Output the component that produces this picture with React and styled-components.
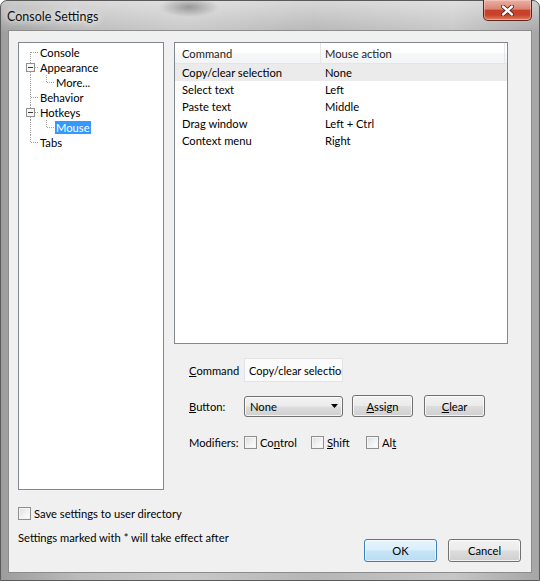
import React from 'react'
import styled, { createGlobalStyle } from 'styled-components'

const FONT = `Lato, "Liberation Sans", Arial, sans-serif`

const GlobalStyle = createGlobalStyle`
  html, body {
    margin: 0;
    padding: 0;
  }
  body {
    width: 540px;
    height: 581px;
    overflow: hidden;
    font-family: ${FONT};
    font-size: 11.2px;
    color: #000;
  }
`

const Window = styled.div`
  box-sizing: border-box;
  width: 540px;
  height: 581px;
  display: flex;
  flex-direction: column;
  padding: 0 7px 7px;
  border: 1px solid #5a5a5a;
  border-radius: 7px 7px 0 0;
  background:
    radial-gradient(ellipse 30px 10px at 188px 6px, rgba(70, 70, 70, 0.45), transparent),
    linear-gradient(180deg, rgba(255, 255, 255, 0.45), rgba(255, 255, 255, 0) 32px),
    linear-gradient(90deg, #9d9d9d 0%, #bababa 14%, #c8c8c8 34%, #b6b6b6 58%, #c6c6c6 84%, #a6a6a6 100%);
`

const TitleBar = styled.div`
  height: 29px;
  display: flex;
  align-items: flex-start;
  justify-content: space-between;
`

const Caption = styled.div`
  margin: 8px 0 0 -1px;
  font-family: ${FONT};
  font-size: 12.5px;
  color: #111;
  text-shadow: 0 0 6px #fff, 0 0 10px rgba(255, 255, 255, 0.9);
`

const CloseButton = styled.div`
  box-sizing: border-box;
  width: 49px;
  height: 21px;
  margin-top: -1px;
  display: flex;
  align-items: center;
  justify-content: center;
  border: 1px solid #5c261c;
  border-top: none;
  border-radius: 0 0 5px 5px;
  background: linear-gradient(180deg, #eab1a3 0%, #d98575 45%, #c8412b 52%, #c7432c 75%, #e0805f 100%);
  box-shadow: inset 0 0 0 1px rgba(255, 220, 210, 0.45);
`

const Client = styled.div`
  flex: 1;
  display: flex;
  flex-direction: column;
  padding: 11px 10px 10px 9px;
  border: 1px solid #8c8c8c;
  background: #f0f0f0;
`

const Main = styled.div`
  display: flex;
  gap: 10px;
  height: 448px;
`

const TreePanel = styled.div`
  box-sizing: border-box;
  width: 146px;
  padding: 2px 0 0 3px;
  border: 1px solid #828790;
  background: #fff;
`

const TreeRow = styled.div`
  display: flex;
  align-items: center;
  height: 15px;
`

const GuideSvg = styled.svg`
  display: block;
  flex: none;
`

const NodeLabel = styled.span`
  margin-left: 1px;
  padding: 0 1px 0 1px;
  line-height: 13px;
  white-space: nowrap;
  background: ${p => (p.$selected ? '#3399ff' : 'transparent')};
  color: ${p => (p.$selected ? '#fff' : '#000')};
`

const RightColumn = styled.div`
  width: 334px;
  display: flex;
  flex-direction: column;
`

const ListView = styled.div`
  box-sizing: border-box;
  height: 302px;
  border: 1px solid #828790;
  background: #fff;
`

const Columns = styled.div`
  display: grid;
  grid-template-columns: 146px 184px;
  align-items: center;
`

const HeaderRow = styled(Columns)`
  height: 20px;
  border-bottom: 1px solid #e3e5e8;
  background: linear-gradient(180deg, #ffffff 0%, #ffffff 45%, #f6f7f8 55%, #f3f4f5 100%);
`

const HeaderCell = styled.div`
  height: 100%;
  display: flex;
  align-items: center;
  padding-left: ${p => p.$pad}px;
  border-right: 1px solid #e5e5e5;
  color: #1e1e1e;
`

const ListRow = styled(Columns)`
  height: 17px;
  background: ${p => (p.$selected ? '#ebebeb' : 'transparent')};
`

const Cell = styled.div`
  padding-left: ${p => p.$pad}px;
  white-space: nowrap;
`

const Form = styled.div`
  display: flex;
  flex-direction: column;
  padding-left: 15px;
`

const FormRow = styled.div`
  display: flex;
  align-items: center;
  height: ${p => p.$h}px;
  margin-top: ${p => p.$top}px;
`

const FieldLabel = styled.div`
  width: 55px;
  flex: none;
`

const ReadOnlyField = styled.div`
  box-sizing: border-box;
  width: 99px;
  height: 24px;
  display: flex;
  align-items: center;
  padding: 0 1px 0 4px;
  overflow: hidden;
  white-space: nowrap;
  font-size: 11px;
  border: 1px solid #e2e3e6;
  background: #fbfbfb;
`

const buttonFace = `
  border: 1px solid #707070;
  border-radius: 3px;
  background: linear-gradient(180deg, #f2f2f2 0%, #ebebeb 48%, #dddddd 52%, #cfcfcf 100%);
  box-shadow: inset 0 0 0 1px rgba(255, 255, 255, 0.75);
`

const Combo = styled.div`
  box-sizing: border-box;
  width: 99px;
  height: 21px;
  display: flex;
  align-items: center;
  justify-content: space-between;
  padding: 0 4px 0 5px;
  ${buttonFace}
`

const PushButton = styled.div`
  box-sizing: border-box;
  width: ${p => p.$w}px;
  height: ${p => p.$h}px;
  margin-left: ${p => p.$gap || 0}px;
  display: flex;
  align-items: center;
  justify-content: center;
  ${buttonFace}
  ${p => p.$default && `
    border-color: #3c7fb1;
    background: linear-gradient(180deg, #e8f4fc 0%, #d9eefb 48%, #c6e5f7 52%, #b9ddf3 100%);
    box-shadow: inset 0 0 0 1px rgba(255, 255, 255, 0.6);
  `}
`

const CheckGroup = styled.label`
  display: flex;
  align-items: center;
  width: ${p => (p.$w ? `${p.$w}px` : 'auto')};
`

const CheckBox = styled.span`
  box-sizing: border-box;
  width: 13px;
  height: 13px;
  margin-right: 3px;
  flex: none;
  border: 1px solid #8f8f8f;
  background: linear-gradient(135deg, #dadcdf 0%, #f4f4f4 60%, #ffffff 100%);
  box-shadow: inset 0 0 0 1px #f4f4f4;
`

const SaveRow = styled.div`
  margin-top: 17px;
  height: 13px;
  display: flex;
`

const Footer = styled.div`
  margin-top: 11px;
  display: flex;
  justify-content: space-between;
  align-items: flex-start;
`

const Note = styled.div`
  line-height: 14px;
`

const DialogButtons = styled.div`
  display: flex;
  margin-top: 8px;
`

const tree = [
  { label: 'Console', guides: [{ v: 'bottom', h: true }] },
  { label: 'Appearance', guides: [{ v: 'full', h: true, box: true }] },
  { label: 'More...', guides: [{ v: 'full' }, { v: 'top', h: true }] },
  { label: 'Behavior', guides: [{ v: 'full', h: true }] },
  { label: 'Hotkeys', guides: [{ v: 'full', h: true, box: true }] },
  { label: 'Mouse', guides: [{ v: 'full' }, { v: 'top', h: true }], selected: true },
  { label: 'Tabs', guides: [{ v: 'top', h: true }] }
]

const bindings = [
  ['Copy/clear selection', 'None'],
  ['Select text', 'Left'],
  ['Paste text', 'Middle'],
  ['Drag window', 'Left + Ctrl'],
  ['Context menu', 'Right']
]

function Guide ({ v, h, box }) {
  const y1 = v === 'bottom' ? 7 : 0
  const y2 = v === 'top' ? 8 : 15
  return (
    <GuideSvg width='16' height='15' viewBox='0 0 16 15' shapeRendering='crispEdges'>
      {v && <line x1='8.5' x2='8.5' y1={y1} y2={y2} stroke='#a0a0a0' strokeDasharray='1 1' />}
      {h && <line x1='9' x2='16' y1='7.5' y2='7.5' stroke='#a0a0a0' strokeDasharray='1 1' />}
      {box && (
        <>
          <rect x='4.5' y='3.5' width='8' height='8' fill='#f7f7f7' stroke='#919191' />
          <line x1='6' x2='11' y1='7.5' y2='7.5' stroke='#3a3a3a' />
        </>
      )}
    </GuideSvg>
  )
}

function CloseGlyph () {
  return (
    <svg width='13' height='11' viewBox='0 0 13 11'>
      <path d='M2 1.5 L11 9.5 M11 1.5 L2 9.5' stroke='#4a1a12' strokeWidth='4' strokeLinecap='round' />
      <path d='M2 1.5 L11 9.5 M11 1.5 L2 9.5' stroke='#fff' strokeWidth='2.4' strokeLinecap='round' />
    </svg>
  )
}

function DropArrow () {
  return (
    <svg width='7' height='4' viewBox='0 0 7 4'>
      <path d='M0 0 H7 L3.5 4 Z' fill='#000' />
    </svg>
  )
}

export default function App () {
  return (
    <>
      <GlobalStyle />
      <Window>
        <TitleBar>
          <Caption>Console Settings</Caption>
          <CloseButton><CloseGlyph /></CloseButton>
        </TitleBar>
        <Client>
          <Main>
            <TreePanel>
              {tree.map(node => (
                <TreeRow key={node.label}>
                  {node.guides.map((g, i) => <Guide key={i} {...g} />)}
                  <NodeLabel $selected={node.selected}>{node.label}</NodeLabel>
                </TreeRow>
              ))}
            </TreePanel>
            <RightColumn>
              <ListView>
                <HeaderRow>
                  <HeaderCell $pad={7}>Command</HeaderCell>
                  <HeaderCell $pad={4}>Mouse action</HeaderCell>
                </HeaderRow>
                {bindings.map(([cmd, action], i) => (
                  <ListRow key={cmd} $selected={i === 0}>
                    <Cell $pad={7}>{cmd}</Cell>
                    <Cell $pad={4}>{action}</Cell>
                  </ListRow>
                ))}
              </ListView>
              <Form>
                <FormRow $h={24} $top={14}>
                  <FieldLabel><u>C</u>ommand</FieldLabel>
                  <ReadOnlyField>Copy/clear selection</ReadOnlyField>
                </FormRow>
                <FormRow $h={22} $top={13}>
                  <FieldLabel><u>B</u>utton:</FieldLabel>
                  <Combo>
                    <span>None</span>
                    <DropArrow />
                  </Combo>
                  <PushButton $w={61} $h={22} $gap={9}><span><u>A</u>ssign</span></PushButton>
                  <PushButton $w={61} $h={22} $gap={11}><span><u>C</u>lear</span></PushButton>
                </FormRow>
                <FormRow $h={14} $top={18}>
                  <FieldLabel>Modifiers:</FieldLabel>
                  <CheckGroup $w={67}><CheckBox />Co<u>n</u>trol</CheckGroup>
                  <CheckGroup $w={55}><CheckBox /><u>S</u>hift</CheckGroup>
                  <CheckGroup><CheckBox />Al<u>t</u></CheckGroup>
                </FormRow>
              </Form>
            </RightColumn>
          </Main>
          <SaveRow>
            <CheckGroup><CheckBox />Save settings to user directory</CheckGroup>
          </SaveRow>
          <Footer>
            <Note>Settings marked with * will take effect after</Note>
            <DialogButtons>
              <PushButton $w={73} $h={23} $default>OK</PushButton>
              <PushButton $w={73} $h={23} $gap={11}>Cancel</PushButton>
            </DialogButtons>
          </Footer>
        </Client>
      </Window>
    </>
  )
}
